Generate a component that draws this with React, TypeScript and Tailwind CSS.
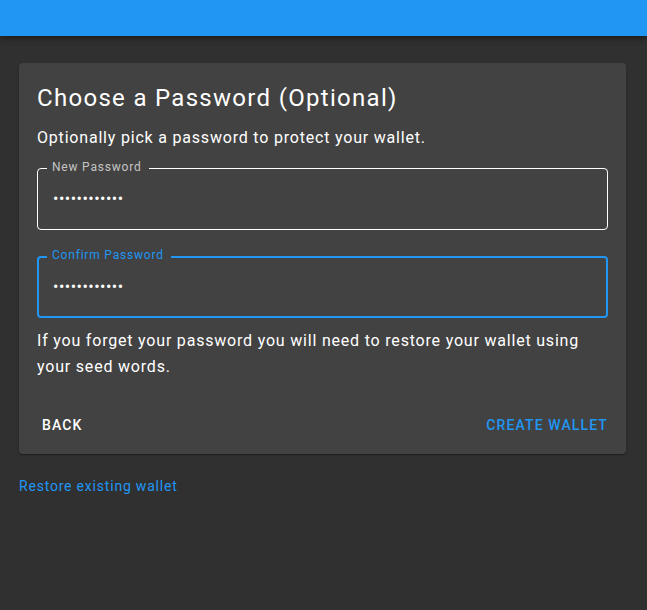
export default function App() {
  return (
    <div className="min-h-screen w-full bg-[#303030] font-['Roboto',_'Liberation_Sans',_sans-serif] tracking-[0.05em] text-white">
      <header className="relative z-10 h-9 w-full bg-[#2196f3] shadow-[0_2px_4px_-1px_rgba(0,0,0,0.2),0_4px_5px_0_rgba(0,0,0,0.14),0_1px_10px_0_rgba(0,0,0,0.12)]" />

      <main className="flex flex-col pl-[19px] pt-[27px]">
        <div className="w-[607px] rounded bg-[#424242] px-[18px] pb-[16px] pt-[19px] shadow-[0_2px_1px_-1px_rgba(0,0,0,0.2),0_1px_1px_0_rgba(0,0,0,0.14),0_1px_3px_0_rgba(0,0,0,0.12)]">
          <h1 className="text-[24px] font-normal leading-8 tracking-[1.3px]">Choose a Password (Optional)</h1>
          <p className="mt-[12px] text-base leading-6">Optionally pick a password to protect your wallet.</p>

          <div className="relative mt-[18px] flex h-[62px] items-center rounded border border-white pl-[15px]">
            <span className="absolute -top-[10px] left-[9px] bg-[#424242] pl-[5px] pr-[7px] text-xs leading-4 text-white/70">
              New Password
            </span>
            <input
              type="password"
              defaultValue="passwordabcd"
              readOnly
              className="w-full bg-transparent text-base tracking-[0.03em] text-white outline-none"
            />
          </div>

          <div className="relative mt-[26px] flex h-[62px] items-center rounded border-2 border-[#2196f3] pl-[14px]">
            <span className="absolute -top-[11px] left-[8px] bg-[#424242] pl-[5px] pr-[7px] text-xs leading-4 text-[#2196f3]">
              Confirm Password
            </span>
            <input
              type="password"
              defaultValue="passwordabcd"
              readOnly
              className="w-full bg-transparent text-base tracking-[0.03em] text-white outline-none"
            />
          </div>

          <p className="mt-[10px] text-base leading-[25.6px]">
            If you forget your password you will need to restore your wallet using your seed words.
          </p>

          <div className="mt-[34px] flex items-center justify-between text-sm font-medium leading-[24.5px]">
            <button className="ml-[5px] uppercase tracking-[0.08em] text-white">Back</button>
            <button className="uppercase tracking-[0.08em] text-[#2196f3]">Create Wallet</button>
          </div>
        </div>

        <a className="mt-[22px] text-sm leading-5 text-[#2196f3]">Restore existing wallet</a>
      </main>
    </div>
  );
}
